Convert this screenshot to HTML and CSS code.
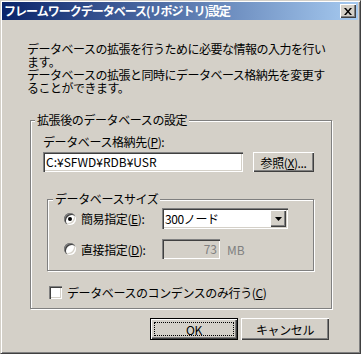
FILE: index.html
```html
<!DOCTYPE html>
<html lang="ja">
<head>
    <meta charset="UTF-8">
    <meta name="viewport" content="width=device-width, initial-scale=1.0">
    <title>フレームワークデータベース(リポジトリ)設定</title>
    <link rel="stylesheet" href="styles.css">
</head>
<body>

    <div class="window">

        <!-- Title bar -->
        <div class="titlebar">
            <span class="title">フレームワークデータベース(リポジトリ)設定</span>
            <div class="close-btn">
                <svg width="8" height="7" viewBox="0 0 8 7">
                    <path d="M0 0h2l2 2.5 2-2.5h2l-3 3.5 3 3.5h-2l-2-2.5-2 2.5h-2l3-3.5z" fill="#000"/>
                </svg>
            </div>
        </div>

        <div class="content">
            <p class="intro">データベースの拡張を行うために必要な情報の入力を行い<br>ます。<br>データベースの拡張と同時にデータベース格納先を変更す<br>ることができます。</p>

            <!-- Target settings -->
            <fieldset class="group outer-group">
                <legend>拡張後のデータベースの設定</legend>
                <div class="group-body">
                    <div class="field-label">データベース格納先(<u>P</u>):</div>
                    <div class="path-row">
                        <div class="textbox path-box">C:¥SFWD¥RDB¥USR</div>
                        <div class="btn browse-btn">参照(<u>X</u>)...</div>
                    </div>

                    <fieldset class="group size-group">
                        <legend>データベースサイズ</legend>
                        <div class="size-body">
                            <div class="option-row">
                                <span class="radio checked"></span>
                                <span class="option-label">簡易指定(<u>E</u>):</span>
                                <div class="combo">
                                    <span class="combo-text">300ノード</span>
                                    <span class="combo-btn">
                                        <svg width="7" height="4" viewBox="0 0 7 4"><path d="M0 0h7l-3.5 4z" fill="#000"/></svg>
                                    </span>
                                </div>
                            </div>
                            <div class="option-row second">
                                <span class="radio"></span>
                                <span class="option-label">直接指定(<u>D</u>):</span>
                                <div class="textbox size-box">73</div>
                                <span class="unit">MB</span>
                            </div>
                        </div>
                    </fieldset>

                    <div class="check-row">
                        <span class="checkbox"></span>
                        <span>データベースのコンデンスのみ行う(<u>C</u>)</span>
                    </div>
                </div>
            </fieldset>

            <!-- Dialog buttons -->
            <div class="actions">
                <div class="btn default-btn"><span>OK</span></div>
                <div class="btn">キャンセル</div>
            </div>
        </div>
    </div>

</body>
</html>
```

FILE: styles.css
```css
body {
    margin: 0;
    font-family: "Noto Sans CJK JP", "DejaVu Sans", sans-serif;
    font-size: 12px;
    color: #000;
    background-color: #d4d0c8;
}

u {
    text-decoration: underline;
    text-underline-offset: 1px;
}

.window {
    width: 361px;
    height: 354px;
    box-sizing: border-box;
    display: flex;
    flex-direction: column;
    background-color: #d4d0c8;
    border: 1px solid;
    border-color: #d4d0c8 #404040 #404040 #d4d0c8;
    box-shadow: inset 1px 1px #fff, inset -1px -1px #808080;
    padding: 1px 2px 2px 1px;
}

.titlebar {
    height: 18px;
    display: flex;
    align-items: center;
    justify-content: space-between;
    padding-left: 2px;
    background: linear-gradient(to right, #0a246a, #a6caf0);
}

.title {
    color: #fff;
    font-weight: bold;
    letter-spacing: -1px;
    line-height: 14px;
}

.close-btn {
    width: 16px;
    height: 14px;
    margin-right: 2px;
    display: flex;
    align-items: center;
    justify-content: center;
    background-color: #d4d0c8;
    box-shadow: inset 1px 1px #fff, inset -1px -1px #404040, inset -2px -2px #808080;
}

.content {
    flex: 1;
    padding: 22px 29px 0 25px;
}

.intro {
    margin: 0;
    line-height: 13px;
    white-space: nowrap;
    letter-spacing: -0.5px;
}

/* etched group boxes */
.group {
    margin: 0;
    padding: 0;
    min-width: 0;
    box-sizing: border-box;
    border: 1px solid #808080;
    box-shadow: inset 1px 1px #fff, 1px 1px #fff;
}

.group legend {
    padding: 0 2px;
    line-height: 14px;
    background-color: #d4d0c8;
    letter-spacing: -0.4px;
}

.outer-group {
    margin: 19px 0 0 3px;
    width: 302px;
}

.outer-group > legend {
    margin-left: 4px;
}

.group-body {
    padding: 8px 0 7px 12px;
}

.field-label {
    line-height: 13px;
    letter-spacing: -0.4px;
}

.path-row {
    display: flex;
    margin-top: 4px;
}

.textbox {
    height: 20px;
    box-sizing: border-box;
    line-height: 20px;
    padding: 0 3px;
    background-color: #fff;
    box-shadow: inset 1px 1px #808080, inset 2px 2px #404040, inset -1px -1px #fff, inset -2px -2px #d4d0c8;
}

.path-box {
    width: 200px;
}

.btn {
    height: 22px;
    box-sizing: border-box;
    display: flex;
    align-items: center;
    justify-content: center;
    background-color: #d4d0c8;
    box-shadow: inset 1px 1px #fff, inset -1px -1px #404040, inset -2px -2px #808080;
    letter-spacing: -0.4px;
}

.browse-btn {
    width: 61px;
    height: 20px;
    margin-left: 10px;
}

.size-group {
    margin: 20px 0 0 4px;
    width: 267px;
}

.size-group > legend {
    margin-left: 5px;
}

.size-body {
    padding: 2px 0 11px 16px;
}

.option-row {
    display: flex;
    align-items: center;
    height: 21px;
}

.option-row.second {
    height: 20px;
    margin-top: 10px;
}

.radio {
    width: 12px;
    height: 12px;
    border-radius: 50%;
    position: relative;
    background-color: #fff;
    box-shadow: inset 1px 1px #808080, inset 2px 2px #404040, inset -1px -1px #fff, inset -2px -2px #d4d0c8;
}

.radio.checked::after {
    content: "";
    position: absolute;
    left: 4px;
    top: 4px;
    width: 4px;
    height: 4px;
    border-radius: 50%;
    background-color: #000;
}

.option-label {
    width: 81px;
    margin-left: 5px;
    letter-spacing: -0.4px;
}

.combo {
    width: 126px;
    height: 21px;
    box-sizing: border-box;
    display: flex;
    align-items: center;
    justify-content: space-between;
    padding: 2px;
    background-color: #fff;
    box-shadow: inset 1px 1px #808080, inset 2px 2px #404040, inset -1px -1px #fff, inset -2px -2px #d4d0c8;
}

.combo-text {
    padding-left: 1px;
    letter-spacing: -0.4px;
}

.combo-btn {
    width: 16px;
    height: 17px;
    display: flex;
    align-items: center;
    justify-content: center;
    background-color: #d4d0c8;
    box-shadow: inset 1px 1px #fff, inset -1px -1px #404040, inset -2px -2px #808080;
}

.size-box {
    width: 58px;
    text-align: right;
    color: #808080;
    background-color: #d4d0c8;
}

.unit {
    margin-left: 7px;
    color: #808080;
}

.check-row {
    display: flex;
    align-items: center;
    gap: 5px;
    margin: 13px 0 0 6px;
    letter-spacing: -0.4px;
}

.checkbox {
    width: 13px;
    height: 13px;
    background-color: #fff;
    box-shadow: inset 1px 1px #808080, inset 2px 2px #404040, inset -1px -1px #fff, inset -2px -2px #d4d0c8;
}

.actions {
    display: flex;
    justify-content: flex-end;
    gap: 3px;
    margin-top: 9px;
}

.actions .btn {
    width: 88px;
}

.default-btn {
    border: 1px solid #000;
    outline: 1px dotted #000;
    outline-offset: -5px;
}
```
